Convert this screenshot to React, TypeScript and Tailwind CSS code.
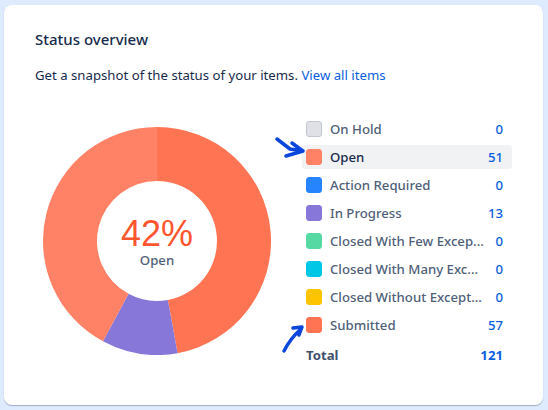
const rows = [
  { label: "On Hold", count: 0, color: "bg-[#dfe1e6]", border: "border-[#c1c7d0]" },
  { label: "Open", count: 51, color: "bg-[#ff8166]", border: "border-[#ff8166]", active: true },
  { label: "Action Required", count: 0, color: "bg-[#2684ff]", border: "border-[#2684ff]" },
  { label: "In Progress", count: 13, color: "bg-[#8777d9]", border: "border-[#8777d9]" },
  { label: "Closed With Few Excep...", count: 0, color: "bg-[#57d9a3]", border: "border-[#57d9a3]" },
  { label: "Closed With Many Exc...", count: 0, color: "bg-[#00c7e6]", border: "border-[#00c7e6]" },
  { label: "Closed Without Except...", count: 0, color: "bg-[#ffc400]", border: "border-[#ffc400]" },
  { label: "Submitted", count: 57, color: "bg-[#ff7452]", border: "border-[#ff7452]" },
];

const slice = (from: number, to: number) => {
  const r1 = 114;
  const r2 = 60;
  const pt = (r: number, deg: number) => {
    const a = (deg * Math.PI) / 180;
    return `${(114 + r * Math.sin(a)).toFixed(2)} ${(114 - r * Math.cos(a)).toFixed(2)}`;
  };
  const large = to - from > 180 ? 1 : 0;
  return `M${pt(r1, from)} A${r1} ${r1} 0 ${large} 1 ${pt(r1, to)} L${pt(r2, to)} A${r2} ${r2} 0 ${large} 0 ${pt(r2, from)} Z`;
};

const Donut = () => (
  <div className="relative h-[228px] w-[228px] shrink-0">
    <svg width="228" height="228" viewBox="0 0 228 228">
      <path d={slice(0, 169.6)} fill="#ff7452" />
      <path d={slice(169.6, 208.3)} fill="#8777d9" />
      <path d={slice(208.3, 360)} fill="#ff8166" />
    </svg>
    <div className="absolute inset-0 flex flex-col items-center justify-center">
      <span className="mt-[4px] font-['Liberation_Sans',sans-serif] text-[36px] leading-[34px] text-[#ff5630]">
        42%
      </span>
      <span className="text-[13.2px] leading-[18px] font-medium text-[#505f79]">Open</span>
    </div>
  </div>
);

const App = () => {
  return (
    <div className="h-[410px] w-[548px] overflow-hidden bg-[#deebff] pt-[5px] pr-[5px] pb-[5px] pl-[4px] font-['Noto_Sans',sans-serif]">
      <div className="relative h-[400px] rounded-lg bg-white pt-[24px] pr-[31px] pl-[31px] shadow-[0_1px_1px_rgba(9,30,66,0.3)]">
        <h2 className="text-[15px] leading-[20px] font-medium text-[#172b4d]">Status overview</h2>
        <p className="mt-[16px] text-[13.2px] leading-[20px] text-[#172b4d]">
          Get a snapshot of the status of your items.{" "}
          <span className="text-[#0b5fe0]">View all items</span>
        </p>
        <div className="mt-[42px] ml-[8px] flex items-start">
          <Donut />
          <div className="mt-[-10px] ml-[31px] flex w-[210px] flex-col gap-[4px]">
            {rows.map((row) => (
              <div
                key={row.label}
                className={`flex h-[24px] items-center rounded-[3px] pr-[9px] pl-[4px] ${row.active ? "bg-[#f1f2f4]" : ""}`}
              >
                <span className={`h-[16px] w-[16px] shrink-0 rounded-[3px] border ${row.color} ${row.border}`} />
                <span
                  className={`ml-[8px] whitespace-nowrap pt-[1px] text-[13.2px] font-medium ${row.active ? "text-[#172b4d]" : "text-[#505f79]"}`}
                >
                  {row.label}
                </span>
                <span className="ml-auto pt-[1px] text-[13.2px] font-medium text-[#0b5fe0]">{row.count}</span>
              </div>
            ))}
            <div className="mt-[3px] flex h-[24px] items-center pr-[9px] pl-[4px] text-[13.2px] font-bold text-[#42526e]">
              <span>Total</span>
              <span className="ml-auto text-[#0b5fe0]">121</span>
            </div>
          </div>
        </div>
        <svg className="absolute top-[125px] left-[266px]" width="45" height="34" viewBox="0 0 45 34" fill="none">
          <path
            d="M7 9 L20 19 L33 21 M22 13 C26 16 30 19 33 21 L16 26"
            stroke="#0a45dc"
            strokeWidth="3.5"
            strokeLinecap="round"
            strokeLinejoin="round"
          />
        </svg>
        <svg className="absolute top-[317px] left-[271px]" width="45" height="34" viewBox="0 0 45 34" fill="none">
          <path
            d="M9 29 C13 21 18 14 26 7 M18 6 L27 5 L24 13"
            stroke="#0a45dc"
            strokeWidth="3.5"
            strokeLinecap="round"
            strokeLinejoin="round"
          />
        </svg>
      </div>
    </div>
  );
};

export default App;
